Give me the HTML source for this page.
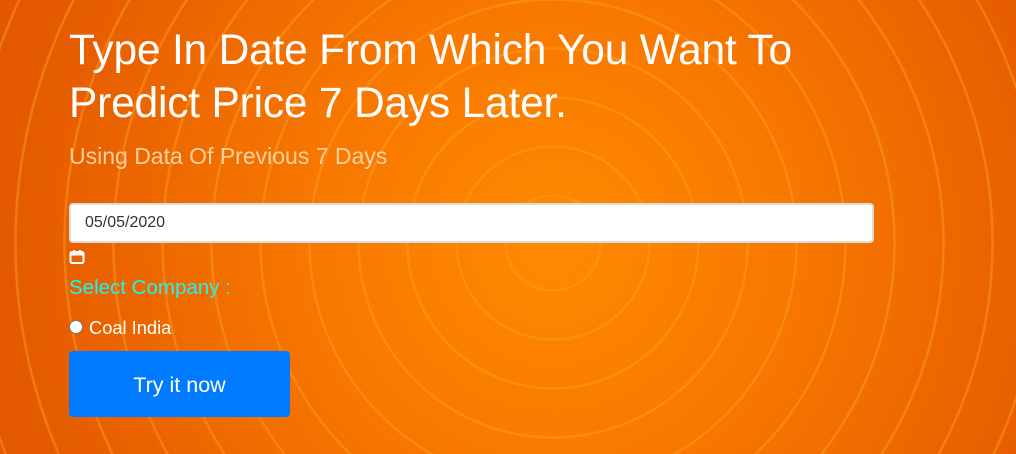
<!DOCTYPE html>
<html><head><style>
html,body{margin:0;padding:0;}
body{width:1016px;height:454px;overflow:hidden;position:relative;font-family:"Segoe UI","Liberation Sans",sans-serif;
background:
repeating-radial-gradient(circle at 553px 243px, rgba(255,160,30,0) 0px, rgba(255,160,30,0) 46px, rgba(255,160,30,.45) 46.5px, rgba(255,160,30,.45) 48.5px, rgba(255,160,30,0) 49px),
radial-gradient(circle at 553px 243px, #ff8a00 0px, #f77700 250px, #e65c00 520px, #dd4f00 700px);}
h1{position:absolute;left:69px;top:24px;margin:0;font-weight:400;font-size:42.5px;line-height:53px;color:#fff;letter-spacing:-0.2px;}
.sub{position:absolute;left:69px;top:144px;font-size:21px;color:#ffd0a0;font-weight:300;}
.inp{position:absolute;left:69px;top:203px;width:805px;height:40px;background:#fff;border:2px solid #ddd;border-radius:4px;box-sizing:border-box;padding-left:14px;font-size:16px;line-height:36px;color:#333;}
.cal{position:absolute;left:69px;top:249px;}
.sel{position:absolute;left:69px;top:276px;font-size:20.5px;color:#1ef4f0;}
.rad{position:absolute;left:69px;top:320px;width:14px;height:14px;border-radius:50%;background:#fff;border:1px solid #777;box-sizing:border-box;}
.lab{position:absolute;left:89px;top:317px;font-size:18.3px;color:#fff;}
.btn{position:absolute;left:69px;top:351px;width:221px;height:66px;background:#007bff;border-radius:4px;color:#fff;font-size:21.5px;text-align:center;line-height:68px;}
</style></head><body>
<h1>Type In Date From Which You Want To<br>Predict Price 7 Days Later.</h1>
<div class="sub" style="font-size:23px;top:143px">Using Data Of Previous 7 Days</div>
<div class="inp">05/05/2020</div>
<svg class="cal" width="16" height="16" viewBox="0 0 16 16"><rect x="1.5" y="3" width="13" height="11" rx="1.5" fill="none" stroke="#fff" stroke-width="2"/><rect x="1.5" y="3" width="13" height="3.5" fill="#fff"/><rect x="4" y="1" width="2" height="3" fill="#fff"/><rect x="10" y="1" width="2" height="3" fill="#fff"/></svg>
<div class="sel">Select Company :</div>
<div class="rad"></div>
<div class="lab">Coal India</div>
<div class="btn">Try it now</div>
</body></html>
